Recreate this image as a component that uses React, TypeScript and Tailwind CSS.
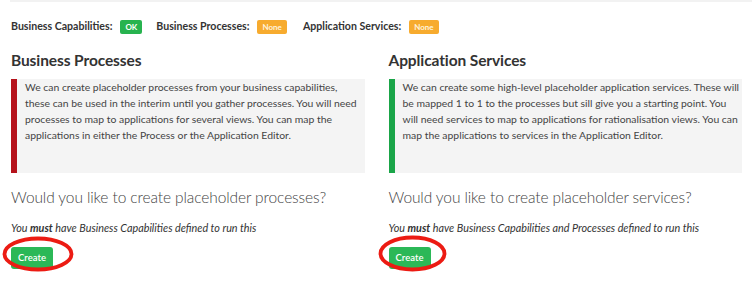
import { ReactNode } from 'react';

interface StatusProps {
  label: string;
  value: string;
  tone: 'ok' | 'none';
}

function Status({ label, value, tone }: StatusProps) {
  return (
    <div className="flex items-center gap-[8px]">
      <span className="text-[10.6px] font-bold text-[#333]">{label}</span>
      <span
        className={
          tone === 'ok'
            ? 'flex h-[14px] items-center rounded-[2px] bg-[#27b34f] px-[5px] text-[8px] font-bold text-white'
            : 'flex h-[14px] items-center rounded-[2px] bg-[#f7ab2e] px-[5px] text-[8px] font-bold text-[#fff3dc]'
        }
      >
        {value}
      </span>
    </div>
  );
}

interface SectionProps {
  title: string;
  accent: 'red' | 'green';
  lines: string[];
  question: string;
  note: ReactNode;
  ring: 'left' | 'right';
}

function Section({ title, accent, lines, question, note, ring }: SectionProps) {
  return (
    <div>
      <h2 className="text-[15.5px] font-bold leading-[20px] tracking-[-0.1px] text-[#333]">{title}</h2>
      <div
        className={
          accent === 'red'
            ? 'mt-[9px] h-[94px] overflow-hidden border-l-[6px] border-[#b5121b] bg-[#f4f4f4] pl-[8px] text-[10.4px] leading-[16px] text-[#444]'
            : 'mt-[9px] h-[94px] overflow-hidden border-l-[6px] border-[#1aa548] bg-[#f4f4f4] pl-[8px] text-[10.4px] leading-[16px] text-[#444]'
        }
      >
        {lines.map((line) => (
          <div key={line} className="whitespace-nowrap">
            {line}
          </div>
        ))}
      </div>
      <p className="mt-[13px] text-[15.5px] font-light leading-[22px] tracking-[-0.1px] text-[#444]">{question}</p>
      <p className="mt-[13px] text-[10.8px] italic leading-[14px] text-[#333]">{note}</p>
      {/* Create button with hand-drawn red ring */}
      <div className="relative mt-[8px] inline-block">
        <button className="h-[22px] w-[42px] rounded-[3px] bg-[#2bb857] text-[9.5px] font-semibold text-white">
          Create
        </button>
        {ring === 'left' ? (
          <svg className="absolute left-[-9px] top-[-7px]" width="72" height="36" viewBox="0 0 72 36">
            <ellipse cx="36" cy="18" rx="33.5" ry="15.5" fill="none" stroke="#ec1b13" strokeWidth="3.8" />
          </svg>
        ) : (
          <svg className="absolute left-[-11px] top-[-8px]" width="69" height="37" viewBox="0 0 69 37">
            <ellipse cx="34.5" cy="18.5" rx="32" ry="16" fill="none" stroke="#ec1b13" strokeWidth="3.8" />
          </svg>
        )}
      </div>
    </div>
  );
}

export default function App() {
  return (
    <div
      className="h-[291px] w-[752px] overflow-hidden bg-white"
      style={{ fontFamily: 'Lato, "Open Sans", sans-serif' }}
    >
      <div className="ml-[10px] h-[2px] bg-[#f2f2f2]" />
      <div className="flex items-center px-[11px] pt-[17px]">
        <Status label="Business Capabilities:" value="OK" tone="ok" />
        <div className="ml-[14px]">
          <Status label="Business Processes:" value="None" tone="none" />
        </div>
        <div className="ml-[16px]">
          <Status label="Application Services:" value="None" tone="none" />
        </div>
      </div>
      <div className="mt-[15px] grid grid-cols-2 gap-[24px] pl-[11px] pr-[10px]">
        <Section
          title="Business Processes"
          accent="red"
          lines={[
            'We can create placeholder processes from your business capabilities,',
            'these can be used in the interim until you gather processes. You will need',
            'processes to map to applications for several views. You can map the',
            'applications in either the Process or the Application Editor.',
          ]}
          question="Would you like to create placeholder processes?"
          note={
            <>
              You <b>must</b> have Business Capabilities defined to run this
            </>
          }
          ring="left"
        />
        <Section
          title="Application Services"
          accent="green"
          lines={[
            'We can create some high-level placeholder application services. These will',
            'be mapped 1 to 1 to the processes but sill give you a starting point. You',
            'will need services to map to applications for rationalisation views. You can',
            'map the applications to services in the Application Editor.',
          ]}
          question="Would you like to create placeholder services?"
          note={
            <>
              You <b>must</b> have Business Capabilities and Processes defined to run this
            </>
          }
          ring="right"
        />
      </div>
    </div>
  );
}
